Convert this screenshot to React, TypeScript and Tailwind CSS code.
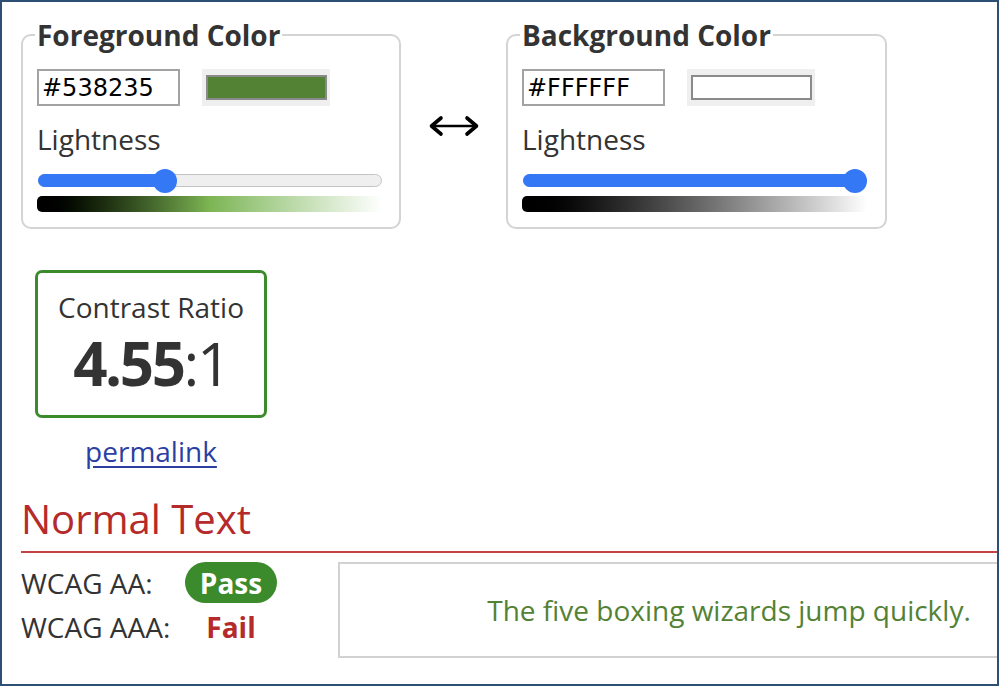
import * as React from 'react'

// ─── Colour picker panel ─────────────────────────────────────────────────────

function ColorPanel({
  title,
  hex,
  swatch,
  lightness,
  gradient,
  width,
}: {
  title: string
  hex: string
  swatch: string
  lightness: number
  gradient: string
  width: string
}) {
  // thumb centre sits inside the track, 12px from each end
  const thumbLeft = lightness * (344 - 24)
  return (
    <fieldset
      className={`${width} flex-none border-2 border-[#d4d4d4] rounded-[10px] pl-[14px] pr-[16px] pb-[15px]`}
    >
      <legend className="-ml-[2px] px-[2px] text-[28px] leading-[34px] font-bold text-[#333]">{title}</legend>

      <div className="mt-[17px] flex items-center gap-[22px]">
        <div className="w-[143px] h-[37px] border-2 border-[#a3a3a3] pl-[3px] flex items-center text-[24px] text-black font-['DejaVu_Sans',sans-serif]">
          {hex}
        </div>
        <div className="w-[128px] h-[37px] bg-[#efefef] pl-[4px] pr-[3px] py-[6px]">
          <div className={`h-full border-2 border-[#8a8a8a] ${swatch}`} />
        </div>
      </div>

      <div className="mt-[14px] text-[28px] leading-[38px] text-[#333]">Lightness</div>

      <div className="mt-[11px] ml-[1px] w-[344px] h-[24px] relative">
        <div className="absolute left-0 right-0 top-[5px] h-[13px] rounded-full bg-[#efefef] border border-[#c4c4c4]" />
        <div
          className="absolute left-0 top-[5px] h-[13px] rounded-full bg-[#3478f6]"
          style={{ width: thumbLeft + 12 }}
        />
        <div
          className="absolute top-0 w-[24px] h-[24px] rounded-full bg-[#3478f6]"
          style={{ left: thumbLeft }}
        />
      </div>

      <div className={`mt-[3px] h-[16px] w-[345px] rounded-[5px] ${gradient}`} />
    </fieldset>
  )
}

function SwapArrow() {
  return (
    <svg width="52" height="22" viewBox="0 0 52 22" fill="none" stroke="#000" strokeLinecap="round" strokeLinejoin="round">
      <path d="M4 11 H48" strokeWidth="2.6" />
      <path d="M13 3 L3.5 11 L13 19" strokeWidth="3.6" />
      <path d="M39 3 L48.5 11 L39 19" strokeWidth="3.6" />
    </svg>
  )
}

export default function App() {
  return (
    <div className="w-[1000px] h-[686px] bg-white font-['Open_Sans',sans-serif]">
      <div className="w-[999px] h-[686px] border-2 border-[#2d4f73] overflow-hidden pl-[19px] pt-[16px] text-[#333]">
        {/* Top row: foreground / swap / background */}
        <div className="flex items-start">
          <ColorPanel
            title="Foreground Color"
            hex="#538235"
            swatch="bg-[#538235]"
            lightness={0.359}
            gradient="bg-linear-to-r from-black via-[#7cb553] to-white"
            width="w-[380px]"
          />
          <div className="w-[105px] flex-none flex justify-center pt-[97px]">
            <SwapArrow />
          </div>
          <ColorPanel
            title="Background Color"
            hex="#FFFFFF"
            swatch="bg-white"
            lightness={1}
            gradient="bg-linear-to-r from-black to-white"
            width="w-[381px]"
          />
        </div>

        {/* Contrast ratio */}
        <div className="ml-[14px] mt-[41px] w-[232px]">
          <div className="h-[148px] border-[3px] border-[#3b8a2b] rounded-[7px] pt-[15px] text-center">
            <div className="text-[28px] leading-[38px]">Contrast Ratio</div>
            <div className="mt-[7px] text-[60px] leading-[60px] tracking-[-0.04em]">
              <span className="font-bold">4.55</span>:1
            </div>
          </div>
          <div className="mt-[14px] text-center text-[28px] leading-[38px]">
            <a className="text-[#2b3fa3] underline underline-offset-[4px]">permalink</a>
          </div>
        </div>

        {/* Normal text */}
        <h2 className="mt-[25px] text-[40px] leading-[48px] pb-[8px] text-[#b52a2a] border-b-2 border-[#c24444]">
          Normal Text
        </h2>

        <div className="mt-[9px] flex items-start">
          <div className="w-[258px] flex-none">
            <div className="flex items-center h-[41px]">
              <span className="w-[164px] text-[28px] leading-[38px]">WCAG AA:</span>
              <span className="w-[92px] h-[41px] rounded-full bg-[#3b8a2b] text-white font-bold text-[28px] flex items-center justify-center">
                Pass
              </span>
            </div>
            <div className="mt-[5px] flex items-center">
              <span className="w-[164px] text-[28px] leading-[38px]">WCAG AAA:</span>
              <span className="w-[92px] text-center text-[#b52a2a] font-bold text-[28px] leading-[38px]">Fail</span>
            </div>
          </div>
          <div className="ml-[59px] w-[782px] h-[96px] flex-none border-2 border-[#d2d2d2] flex items-center justify-center text-[28px] text-[#538235]">
            The five boxing wizards jump quickly.
          </div>
        </div>
      </div>
    </div>
  )
}
